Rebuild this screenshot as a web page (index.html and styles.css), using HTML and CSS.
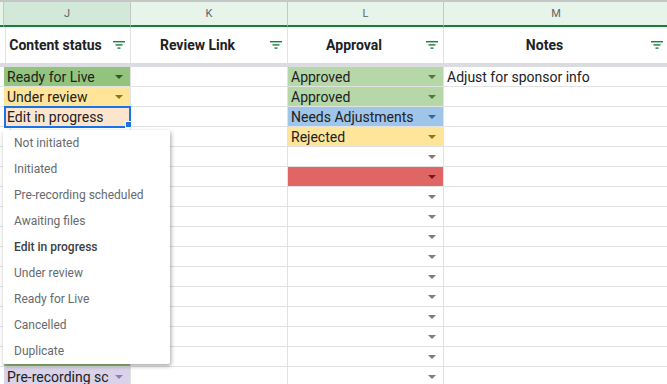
FILE: index.html
```html
<!doctype html>
<html>
<head>
    <title>Content tracker</title>
<link rel="stylesheet" href="styles.css">
</head>
<body>
<div class="sheet">
    <div class="row col-heads">
        <div class="cell"></div>
        <div class="cell picked">J</div>
        <div class="cell">K</div>
        <div class="cell">L</div>
        <div class="cell">M</div>
    </div>
    <div class="row titles">
        <div class="cell"></div>
        <div class="cell"><span class="title">Content status</span><svg class="filter" viewBox="0 0 12 8"><rect x="0" y="0" width="12" height="1.4"/><rect x="2.5" y="3.2" width="7" height="1.4"/><rect x="4.5" y="6.4" width="3" height="1.4"/></svg></div>
        <div class="cell"><span class="title">Review Link</span><svg class="filter" viewBox="0 0 12 8"><rect x="0" y="0" width="12" height="1.4"/><rect x="2.5" y="3.2" width="7" height="1.4"/><rect x="4.5" y="6.4" width="3" height="1.4"/></svg></div>
        <div class="cell"><span class="title">Approval</span><svg class="filter" viewBox="0 0 12 8"><rect x="0" y="0" width="12" height="1.4"/><rect x="2.5" y="3.2" width="7" height="1.4"/><rect x="4.5" y="6.4" width="3" height="1.4"/></svg></div>
        <div class="cell"><span class="title">Notes</span><svg class="filter" viewBox="0 0 12 8"><rect x="0" y="0" width="12" height="1.4"/><rect x="2.5" y="3.2" width="7" height="1.4"/><rect x="4.5" y="6.4" width="3" height="1.4"/></svg></div>
    </div>
    <div class="freeze"></div>

    <div class="row">
        <div class="cell"></div>
        <div class="cell live"><span class="val">Ready for Live</span><i class="arrow"></i></div>
        <div class="cell"></div>
        <div class="cell approved"><span class="val">Approved</span><i class="arrow"></i></div>
        <div class="cell"><span class="val">Adjust for sponsor info</span></div>
    </div>
    <div class="row">
        <div class="cell"></div>
        <div class="cell review"><span class="val">Under review</span><i class="arrow"></i></div>
        <div class="cell"></div>
        <div class="cell approved"><span class="val">Approved</span><i class="arrow"></i></div>
        <div class="cell"></div>
    </div>
    <div class="row">
        <div class="cell"></div>
        <div class="cell editing active"><span class="val">Edit in progress</span></div>
        <div class="cell"></div>
        <div class="cell adjust"><span class="val">Needs Adjustments</span><i class="arrow"></i></div>
        <div class="cell"></div>
    </div>
    <div class="row">
        <div class="cell"></div>
        <div class="cell"></div>
        <div class="cell"></div>
        <div class="cell rejected"><span class="val">Rejected</span><i class="arrow"></i></div>
        <div class="cell"></div>
    </div>
    <div class="row">
        <div class="cell"></div>
        <div class="cell"></div>
        <div class="cell"></div>
        <div class="cell"><span class="val"></span><i class="arrow"></i></div>
        <div class="cell"></div>
    </div>
    <div class="row">
        <div class="cell"></div>
        <div class="cell"></div>
        <div class="cell"></div>
        <div class="cell flagged"><span class="val"></span><i class="arrow"></i></div>
        <div class="cell"></div>
    </div>
    <div class="row"><div class="cell"></div><div class="cell"></div><div class="cell"></div><div class="cell"><span class="val"></span><i class="arrow"></i></div><div class="cell"></div></div>
    <div class="row"><div class="cell"></div><div class="cell"></div><div class="cell"></div><div class="cell"><span class="val"></span><i class="arrow"></i></div><div class="cell"></div></div>
    <div class="row"><div class="cell"></div><div class="cell"></div><div class="cell"></div><div class="cell"><span class="val"></span><i class="arrow"></i></div><div class="cell"></div></div>
    <div class="row"><div class="cell"></div><div class="cell"></div><div class="cell"></div><div class="cell"><span class="val"></span><i class="arrow"></i></div><div class="cell"></div></div>
    <div class="row"><div class="cell"></div><div class="cell"></div><div class="cell"></div><div class="cell"><span class="val"></span><i class="arrow"></i></div><div class="cell"></div></div>
    <div class="row"><div class="cell"></div><div class="cell"></div><div class="cell"></div><div class="cell"><span class="val"></span><i class="arrow"></i></div><div class="cell"></div></div>
    <div class="row"><div class="cell"></div><div class="cell"></div><div class="cell"></div><div class="cell"><span class="val"></span><i class="arrow"></i></div><div class="cell"></div></div>
    <div class="row"><div class="cell"></div><div class="cell"></div><div class="cell"></div><div class="cell"><span class="val"></span><i class="arrow"></i></div><div class="cell"></div></div>
    <div class="row">
        <div class="cell"></div>
        <div class="cell live"><span class="val"></span><i class="arrow"></i></div>
        <div class="cell"></div>
        <div class="cell"><span class="val"></span><i class="arrow"></i></div>
        <div class="cell"></div>
    </div>
    <div class="row">
        <div class="cell"></div>
        <div class="cell prerec"><span class="val">Pre-recording scheduled</span><i class="arrow"></i></div>
        <div class="cell"></div>
        <div class="cell"><span class="val"></span><i class="arrow"></i></div>
        <div class="cell"></div>
    </div>

    <!-- dropdown for the active status cell -->
    <ul class="menu">
        <li>Not initiated</li>
        <li>Initiated</li>
        <li>Pre-recording scheduled</li>
        <li>Awaiting files</li>
        <li class="current">Edit in progress</li>
        <li>Under review</li>
        <li>Ready for Live</li>
        <li>Cancelled</li>
        <li>Duplicate</li>
    </ul>
</div>
</body>
</html>
```

FILE: styles.css
```css
body {
    margin: 0;
    overflow: hidden;
    font-family: Roboto, "Liberation Sans", sans-serif;
    background: #fff;
}
.sheet {
    position: relative;
    width: 669px;
}
.row {
    display: grid;
    grid-template-columns: 4px 127px 157px 156px 225px;
    height: 20px;
}
.cell {
    box-sizing: border-box;
    display: flex;
    align-items: center;
    padding: 0 7px 0 3px;
    border-right: 1px solid #e2e2e2;
    border-bottom: 1px solid #e2e2e2;
    font-size: 14px;
    color: #202124;
    overflow: hidden;
    white-space: nowrap;
}
.val {
    flex: 1;
    min-width: 0;
    overflow: hidden;
}
.arrow {
    flex: none;
    margin-left: 6px;
    width: 0;
    height: 0;
    border-left: 4px solid transparent;
    border-right: 4px solid transparent;
    border-top: 4px solid #7d7d7d;
}

/* column letters */
.col-heads {
    height: 27px;
    border-top: 2px solid #c4c7c5;
    box-sizing: border-box;
}
.col-heads .cell {
    justify-content: center;
    padding: 0;
    background: #e6f4ea;
    border-bottom: 2px solid #188038;
    border-right-color: #c4c7c5;
    font-size: 11px;
    color: #5f6368;
}
.col-heads .picked {
    background: #d2e8d8;
}

/* header titles */
.titles {
    height: 36px;
}
.titles .cell {
    border-bottom: none;
    padding: 0 5px 0 0;
}
.title {
    flex: 1;
    text-align: center;
    font-weight: bold;
    color: #202124;
    padding-left: 2px;
}
.filter {
    width: 12px;
    height: 8px;
    fill: #188038;
    margin-left: 8px;
}
.freeze {
    height: 4px;
    background: #dadce0;
}

/* cell colours */
.live { background: #93c47d; }
.live .arrow { border-top-color: #2f5a1f; }
.review,
.rejected { background: #ffe599; }
.review .arrow,
.rejected .arrow { border-top-color: #94740b; }
.editing { background: #fce5cd; }
.approved { background: #b6d7a8; }
.approved .arrow { border-top-color: #4d7a3c; }
.adjust { background: #9fc5e8; }
.adjust .arrow { border-top-color: #2f67a3; }
.flagged { background: #e06666; }
.flagged .arrow { border-top-color: #7e1616; }
.prerec { background: #d9d2e9; }
.prerec .arrow { border-top-color: #8e7cc3; }

.active {
    position: relative;
    overflow: visible;
}
.active::after {
    content: "";
    position: absolute;
    left: 0;
    top: -1px;
    right: -1px;
    bottom: -2px;
    border: 2px solid #1a73e8;
    z-index: 2;
}
.active::before {
    content: "";
    position: absolute;
    right: -2px;
    bottom: -2px;
    width: 5px;
    height: 5px;
    background: #1a73e8;
    border: 1px solid #fff;
    z-index: 3;
}

/* dropdown */
.menu {
    position: absolute;
    left: 3px;
    top: 130px;
    width: 167px;
    margin: 0;
    padding: 0;
    list-style: none;
    background: #fff;
    border-radius: 2px;
    box-shadow: 1px 2px 4px rgba(0, 0, 0, 0.35);
    z-index: 5;
}
.menu li {
    height: 26px;
    line-height: 26px;
    padding-left: 11px;
    font-size: 12px;
    color: #666a6e;
}
.menu .current {
    color: #3c4043;
    font-weight: 500;
}
```
